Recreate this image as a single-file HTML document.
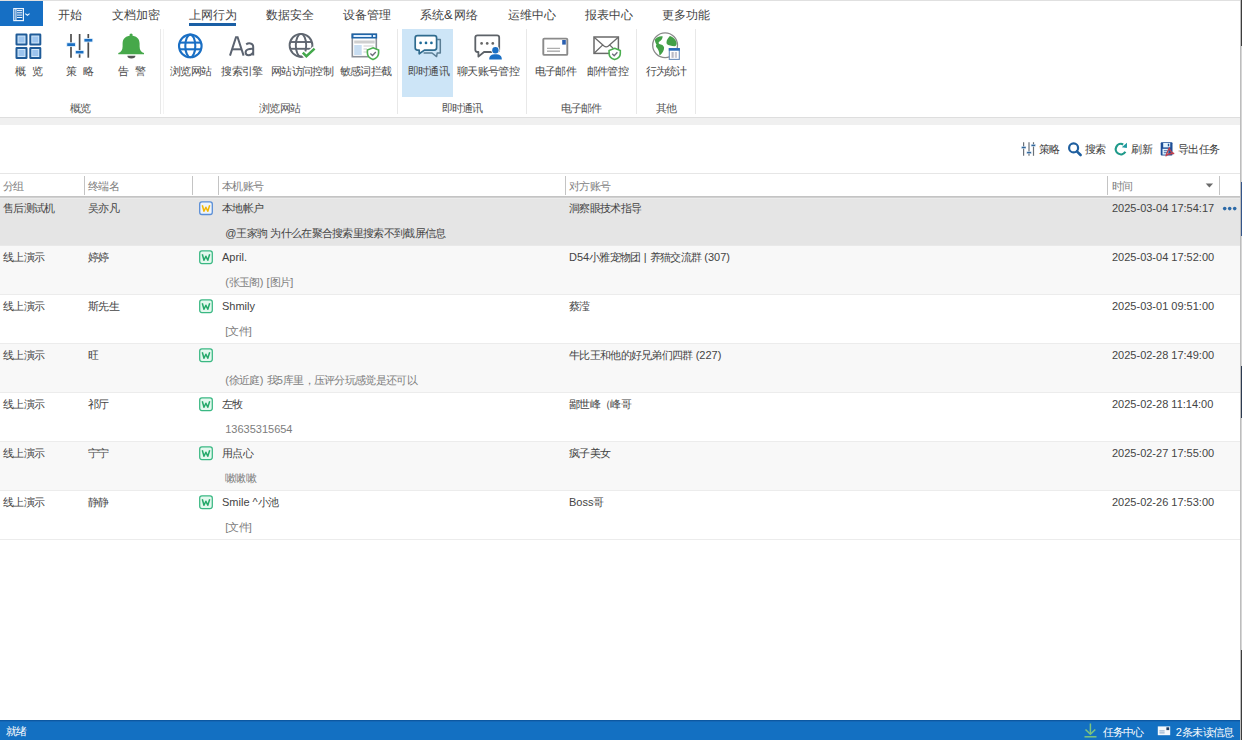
<!DOCTYPE html>
<html><head><meta charset="utf-8"><style>
*{margin:0;padding:0;box-sizing:border-box}
html,body{width:1242px;height:740px;overflow:hidden;background:#fff}
body{position:relative;font-family:"Liberation Sans",sans-serif}
.r{position:absolute}
.t,.tab,.lbl,.grp,.tb,.hd,.row,.row2,.st{position:absolute;white-space:pre;line-height:12px;font-size:11px;color:#444}
.c{font-size:11px;letter-spacing:-.7px}
.tab{font-size:12px;color:#444}
.amp{font-size:13px;letter-spacing:1.3px}
.tab .c{font-size:12px;letter-spacing:0}
.lbl{color:#4a4a4a}
.grp{color:#555}
.tb{color:#3c3c3c}
.hd{color:#808080}
.row{color:#444}
.row2{color:#7d7d7d}
.st{color:#fff}
svg.ov{position:absolute;left:0;top:0}
</style></head><body>
<div class="r" style="left:0px;top:0px;width:1242px;height:1px;background:#e0e0e0;"></div>
<div class="r" style="left:0px;top:1px;width:43px;height:24.5px;background:#166fc4;"></div>
<div class="tab" style="left:58px;top:9px;"><span class="c">开始</span></div>
<div class="tab" style="left:111.5px;top:9px;"><span class="c">文档加密</span></div>
<div class="tab" style="left:189px;top:9px;"><span class="c">上网行为</span></div>
<div class="tab" style="left:265.5px;top:9px;"><span class="c">数据安全</span></div>
<div class="tab" style="left:343px;top:9px;"><span class="c">设备管理</span></div>
<div class="tab" style="left:420px;top:9px;"><span class="c">系统</span><span class="amp">&amp;</span><span class="c">网络</span></div>
<div class="tab" style="left:507.5px;top:9px;"><span class="c">运维中心</span></div>
<div class="tab" style="left:584.5px;top:9px;"><span class="c">报表中心</span></div>
<div class="tab" style="left:662px;top:9px;"><span class="c">更多功能</span></div>
<div class="r" style="left:189px;top:23px;width:47px;height:2.5px;background:#1a5fa5;"></div>
<div class="r" style="left:402px;top:28.5px;width:51px;height:68px;background:#cde5f7;"></div>
<div class="lbl" style="left:15px;top:65px;"><span class="c">概</span></div>
<div class="lbl" style="left:31.8px;top:65px;"><span class="c">览</span></div>
<div class="lbl" style="left:66.2px;top:65px;"><span class="c">策</span></div>
<div class="lbl" style="left:83.1px;top:65px;"><span class="c">略</span></div>
<div class="lbl" style="left:118.2px;top:65px;"><span class="c">告</span></div>
<div class="lbl" style="left:135.1px;top:65px;"><span class="c">警</span></div>
<div class="lbl" style="left:170px;top:65px;"><span class="c">浏览网站</span></div>
<div class="lbl" style="left:221.4px;top:65px;"><span class="c">搜索引擎</span></div>
<div class="lbl" style="left:271.1px;top:65px;"><span class="c">网站访问控制</span></div>
<div class="lbl" style="left:339.7px;top:65px;"><span class="c">敏感词拦截</span></div>
<div class="lbl" style="left:407.8px;top:65px;"><span class="c">即时通讯</span></div>
<div class="lbl" style="left:457.2px;top:65px;"><span class="c">聊天账号管控</span></div>
<div class="lbl" style="left:534.8px;top:65px;"><span class="c">电子邮件</span></div>
<div class="lbl" style="left:586.8px;top:65px;"><span class="c">邮件管控</span></div>
<div class="lbl" style="left:645.6px;top:65px;"><span class="c">行为统计</span></div>
<div class="grp" style="left:69.6px;top:102px;"><span class="c">概览</span></div>
<div class="grp" style="left:259px;top:102px;"><span class="c">浏览网站</span></div>
<div class="grp" style="left:441.6px;top:102px;"><span class="c">即时通讯</span></div>
<div class="grp" style="left:560.6px;top:102px;"><span class="c">电子邮件</span></div>
<div class="grp" style="left:655.7px;top:102px;"><span class="c">其他</span></div>
<div class="r" style="left:160px;top:29px;width:1px;height:85px;background:#e8e8e8;"></div>
<div class="r" style="left:397px;top:29px;width:1px;height:85px;background:#e8e8e8;"></div>
<div class="r" style="left:526px;top:29px;width:1px;height:85px;background:#e8e8e8;"></div>
<div class="r" style="left:636px;top:29px;width:1px;height:85px;background:#e8e8e8;"></div>
<div class="r" style="left:695px;top:29px;width:1px;height:85px;background:#e8e8e8;"></div>
<div class="r" style="left:163px;top:29px;width:1px;height:85px;background:#f3f3f3;"></div>
<div class="r" style="left:0px;top:117px;width:1240px;height:1px;background:#dedede;"></div>
<div class="r" style="left:0px;top:118px;width:1240px;height:7px;background:#f0f0f0;"></div>
<div class="tb" style="left:1039px;top:143px;"><span class="c">策略</span></div>
<div class="tb" style="left:1085px;top:143px;"><span class="c">搜索</span></div>
<div class="tb" style="left:1131.4px;top:143px;"><span class="c">刷新</span></div>
<div class="tb" style="left:1178px;top:143px;"><span class="c">导出任务</span></div>
<div class="r" style="left:0px;top:173px;width:1240px;height:1px;background:#e6e6e6;"></div>
<div class="r" style="left:84px;top:176px;width:1px;height:19px;background:#c4c4c4;"></div>
<div class="r" style="left:192px;top:176px;width:1px;height:19px;background:#c4c4c4;"></div>
<div class="r" style="left:218px;top:176px;width:1px;height:19px;background:#c4c4c4;"></div>
<div class="r" style="left:565px;top:176px;width:1px;height:19px;background:#c4c4c4;"></div>
<div class="r" style="left:1107px;top:176px;width:1px;height:19px;background:#c4c4c4;"></div>
<div class="r" style="left:1219px;top:176px;width:1px;height:19px;background:#c4c4c4;"></div>
<div class="hd" style="left:3px;top:180px;"><span class="c">分组</span></div>
<div class="hd" style="left:88px;top:180px;"><span class="c">终端名</span></div>
<div class="hd" style="left:222px;top:180px;"><span class="c">本机账号</span></div>
<div class="hd" style="left:569px;top:180px;"><span class="c">对方账号</span></div>
<div class="hd" style="left:1112px;top:180px;"><span class="c">时间</span></div>
<div class="r" style="left:0px;top:197px;width:1240px;height:48px;background:#e5e5e5;"></div>
<div class="r" style="left:0px;top:245px;width:1240px;height:1px;background:#e9e9e9;"></div>
<div class="row" style="left:3px;top:202px;"><span class="c">售后测试机</span></div>
<div class="row" style="left:88px;top:202px;"><span class="c">吴亦凡</span></div>
<div class="row" style="left:222px;top:202px;"><span class="c">本地帐户</span></div>
<div class="row" style="left:225.2px;top:227px;">@<span class="c">王家驹</span> <span class="c">为什么在聚合搜索里搜索不到截屏信息</span></div>
<div class="row" style="left:569px;top:202px;"><span class="c">洞察眼技术指导</span></div>
<div class="row" style="left:1112px;top:202px;">2025-03-04 17:54:17</div>
<div class="r" style="left:0px;top:246px;width:1240px;height:48px;background:#f8f8f8;"></div>
<div class="r" style="left:0px;top:294px;width:1240px;height:1px;background:#ececec;"></div>
<div class="row" style="left:3px;top:251px;"><span class="c">线上演示</span></div>
<div class="row" style="left:88px;top:251px;"><span class="c">婷婷</span></div>
<div class="row" style="left:222px;top:251px;">April.</div>
<div class="row2" style="left:225.2px;top:276px;">(<span class="c">张玉阁</span>) [<span class="c">图片</span>]</div>
<div class="row" style="left:569px;top:251px;">D54<span class="c">小雅宠物团</span> | <span class="c">养猫交流群</span> (307)</div>
<div class="row" style="left:1112px;top:251px;">2025-03-04 17:52:00</div>
<div class="r" style="left:0px;top:295px;width:1240px;height:48px;background:#ffffff;"></div>
<div class="r" style="left:0px;top:343px;width:1240px;height:1px;background:#ececec;"></div>
<div class="row" style="left:3px;top:300px;"><span class="c">线上演示</span></div>
<div class="row" style="left:88px;top:300px;"><span class="c">斯先生</span></div>
<div class="row" style="left:222px;top:300px;">Shmily</div>
<div class="row2" style="left:225.2px;top:325px;">[<span class="c">文件</span>]</div>
<div class="row" style="left:569px;top:300px;"><span class="c">蔡滢</span></div>
<div class="row" style="left:1112px;top:300px;">2025-03-01 09:51:00</div>
<div class="r" style="left:0px;top:344px;width:1240px;height:48px;background:#f8f8f8;"></div>
<div class="r" style="left:0px;top:392px;width:1240px;height:1px;background:#ececec;"></div>
<div class="row" style="left:3px;top:349px;"><span class="c">线上演示</span></div>
<div class="row" style="left:88px;top:349px;"><span class="c">旺</span></div>
<div class="row" style="left:222px;top:349px;"></div>
<div class="row2" style="left:225.2px;top:374px;">(<span class="c">徐近庭</span>) <span class="c">我</span>5<span class="c">库里，压评分玩感觉是还可以</span></div>
<div class="row" style="left:569px;top:349px;"><span class="c">牛比王和他的好兄弟们四群</span> (227)</div>
<div class="row" style="left:1112px;top:349px;">2025-02-28 17:49:00</div>
<div class="r" style="left:0px;top:393px;width:1240px;height:48px;background:#ffffff;"></div>
<div class="r" style="left:0px;top:441px;width:1240px;height:1px;background:#ececec;"></div>
<div class="row" style="left:3px;top:398px;"><span class="c">线上演示</span></div>
<div class="row" style="left:88px;top:398px;"><span class="c">祁厅</span></div>
<div class="row" style="left:222px;top:398px;"><span class="c">左牧</span></div>
<div class="row2" style="left:225.2px;top:423px;">13635315654</div>
<div class="row" style="left:569px;top:398px;"><span class="c">鄙世峰（峰哥</span></div>
<div class="row" style="left:1112px;top:398px;">2025-02-28 11:14:00</div>
<div class="r" style="left:0px;top:442px;width:1240px;height:48px;background:#f8f8f8;"></div>
<div class="r" style="left:0px;top:490px;width:1240px;height:1px;background:#ececec;"></div>
<div class="row" style="left:3px;top:447px;"><span class="c">线上演示</span></div>
<div class="row" style="left:88px;top:447px;"><span class="c">宁宁</span></div>
<div class="row" style="left:222px;top:447px;"><span class="c">用点心</span></div>
<div class="row2" style="left:225.2px;top:472px;"><span class="c">嗽嗽嗽</span></div>
<div class="row" style="left:569px;top:447px;"><span class="c">疯子美女</span></div>
<div class="row" style="left:1112px;top:447px;">2025-02-27 17:55:00</div>
<div class="r" style="left:0px;top:491px;width:1240px;height:48px;background:#ffffff;"></div>
<div class="r" style="left:0px;top:539px;width:1240px;height:1px;background:#ececec;"></div>
<div class="row" style="left:3px;top:496px;"><span class="c">线上演示</span></div>
<div class="row" style="left:88px;top:496px;"><span class="c">静静</span></div>
<div class="row" style="left:222px;top:496px;">Smile ^<span class="c">小池</span></div>
<div class="row2" style="left:225.2px;top:521px;">[<span class="c">文件</span>]</div>
<div class="row" style="left:569px;top:496px;">Boss<span class="c">哥</span></div>
<div class="row" style="left:1112px;top:496px;">2025-02-26 17:53:00</div>
<div class="r" style="left:0px;top:196px;width:1240px;height:1px;background:#c4c4c4;"></div>
<div class="r" style="left:0px;top:197px;width:1240px;height:1px;background:#d0d0d0;"></div>
<div class="r" style="left:0px;top:198px;width:1240px;height:1px;background:#ebebeb;"></div>
<div class="r" style="left:0px;top:720px;width:1240px;height:20px;background:#1370c2;"></div>
<div class="r" style="left:0px;top:720px;width:1240px;height:1px;background:#0c58a2;"></div>
<div class="r" style="left:0px;top:721px;width:1240px;height:1px;background:#1466b5;"></div>
<div class="st" style="left:6px;top:725px;"><span class="c">就绪</span></div>
<div class="st" style="left:1102.5px;top:725.5px;"><span class="c">任务中心</span></div>
<div class="st" style="left:1175.8px;top:725.5px;">2<span class="c">条未读信息</span></div>
<div class="r" style="left:1240px;top:0px;width:1px;height:740px;background:#bdbdbd;"></div>
<div class="r" style="left:1241px;top:0px;width:1px;height:46px;background:#3c3c3c;"></div>
<div class="r" style="left:1241px;top:46px;width:1px;height:694px;background:#d6d6d6;"></div>
<div class="r" style="left:1241px;top:182px;width:1px;height:54px;background:#34558a;"></div>
<div class="r" style="left:1241px;top:366px;width:1px;height:52px;background:#2c3a50;"></div>
<div class="r" style="left:1241px;top:650px;width:1px;height:90px;background:#3c3c3c;"></div>
<svg class="ov" width="1242" height="740" viewBox="0 0 1242 740">
<!-- app menu icon -->
<rect x="13.8" y="8.6" width="9.6" height="12" fill="#1466b8" stroke="#eaf4ff" stroke-width="1.2"/>
<line x1="15.9" y1="8.6" x2="15.9" y2="20.6" stroke="#eaf4ff" stroke-width="1.1"/>
<g stroke="#eaf4ff" stroke-width="1.1"><line x1="17" y1="10.6" x2="22.2" y2="10.6"/><line x1="17" y1="12.8" x2="22.2" y2="12.8"/><line x1="17" y1="15.1" x2="22.2" y2="15.1"/><line x1="17" y1="17.5" x2="22.2" y2="17.5"/></g>
<path d="M25.3 13.6 L27.4 15.3 L29.6 13.6" stroke="#eaf4ff" stroke-width="1.1" fill="none"/>
<!-- grid -->
<g stroke="#1f5b98" stroke-width="2" fill="#d2e8fb">
<rect x="16.5" y="34.5" width="10" height="10" rx="0.3"/><rect x="30.3" y="34.5" width="10" height="10" rx="0.3"/>
<rect x="16.5" y="48" width="10" height="10" rx="0.3"/><rect x="30.3" y="48" width="10" height="10" rx="0.3"/>
</g>
<g fill="#9cc4ee">
<rect x="18.5" y="36.5" width="6" height="6"/><rect x="32.3" y="36.5" width="6" height="6"/>
<rect x="18.5" y="50" width="6" height="6"/><rect x="32.3" y="50" width="6" height="6"/>
</g>
<!-- sliders -->
<g stroke="#4d4d4d" stroke-width="1.7">
<line x1="71" y1="34" x2="71" y2="57.7"/><line x1="79.6" y1="34" x2="79.6" y2="57.7"/><line x1="88.3" y1="34" x2="88.3" y2="57.7"/>
</g>
<g fill="#1a6fc2" stroke="#e8f3fd" stroke-width="0.8">
<rect x="66.8" y="42.8" width="8.6" height="3.6"/><rect x="75.3" y="50.5" width="8.6" height="3.4"/><rect x="84" y="38.5" width="8.8" height="3.5"/>
</g>
<!-- bell -->
<g fill="#46a84a">
<circle cx="131.1" cy="35" r="1.6"/>
<path d="M118.3 54.3 L144 54.3 L144 53 C141.2 52.2, 139.6 50, 139.6 46.5 L139.6 43.5 C139.6 38.3, 136 35.8, 131.1 35.8 C126.2 35.8, 122.6 38.3, 122.6 43.5 L122.6 46.5 C122.6 50, 121 52.2, 118.3 53 Z"/>
</g>
<path d="M127.4 55.8 L135.4 55.8 A4 2.6 0 0 1 127.4 55.8 Z" fill="#555"/>
<!-- globe blue -->
<g stroke="#1a6fc4" stroke-width="2.1" fill="none">
<circle cx="190.3" cy="45.9" r="11.3"/>
<ellipse cx="190.3" cy="45.9" rx="5" ry="11.3"/>
<line x1="179.5" y1="42.6" x2="201.1" y2="42.6"/><line x1="179.5" y1="49.3" x2="201.1" y2="49.3"/>
</g>
<!-- Aa -->
<g stroke="#5b6370" stroke-width="2" fill="none" stroke-linejoin="miter">
<path d="M230 55.6 L236 37.3 L237.6 37.3 L243.6 55.6"/><line x1="232.3" y1="49.3" x2="241.3" y2="49.3"/>
<path d="M246.2 44.4 C248.2 42.9, 253.2 42.6, 253.2 46.8 L253.2 55.6"/>
<path d="M253.2 48.9 C249.5 48.7, 245.6 49.2, 245.6 52.4 C245.6 56, 251.2 56.1, 253.2 52.6"/>
</g>
<!-- globe gray w check -->
<g stroke="#5f6670" stroke-width="1.9" fill="none">
<circle cx="301" cy="45.3" r="11.4"/>
<ellipse cx="301" cy="45.3" rx="5.2" ry="11.4"/>
<line x1="290" y1="42" x2="312" y2="42"/><line x1="290" y1="48.8" x2="312" y2="48.8"/>
</g>
<path d="M302.8 52.6 L306.4 56.2 L314.6 48.6" stroke="#fff" stroke-width="5.5" fill="none"/>
<path d="M302.8 52.6 L306.4 56.2 L314.6 48.6" stroke="#43a84b" stroke-width="2.5" fill="none"/>
<!-- browser shield -->
<rect x="352.3" y="34.3" width="24" height="22.4" fill="#fff" stroke="#8d9198" stroke-width="1.6"/>
<rect x="351.5" y="33.5" width="25.6" height="5" fill="#1e64a8"/>
<rect x="353.5" y="35" width="18" height="2" fill="#dfefff"/>
<rect x="373" y="35" width="2.5" height="2" fill="#dfefff"/>
<rect x="354.2" y="40.5" width="20.5" height="3" fill="#cfcfcf"/>
<rect x="354.2" y="45" width="7.5" height="10" fill="#c8ddf1"/>
<g stroke="#cfcfcf" stroke-width="1.1"><line x1="363.5" y1="46" x2="373.5" y2="46"/><line x1="363.5" y1="49" x2="367" y2="49"/><line x1="363.5" y1="52" x2="367" y2="52"/></g>
<path d="M373 47.8 L378.6 50 L378.6 53 C378.6 56.5, 376 58.5, 373 59.6 C370 58.5, 367.4 56.5, 367.4 53 L367.4 50 Z" fill="#fff" stroke="#4caf50" stroke-width="1.6"/>
<path d="M370.4 53.5 L372.5 55.5 L375.8 52" stroke="#6b6b7a" stroke-width="1.3" fill="none"/>
<!-- chat -->
<path d="M437.2 39.6 L440.3 39.6 L440.3 53 L437.2 53 L436.6 56.6 L432 53 L423.6 53" stroke="#5a7d94" stroke-width="1.5" fill="none" stroke-linejoin="round"/>
<path d="M417.5 35.6 L434.3 35.6 Q436.6 35.6 436.6 37.9 L436.6 47.8 Q436.6 50.1 434.3 50.1 L424.4 50.1 L419.2 53.8 L419.2 50.1 L417.5 50.1 Q415.2 50.1 415.2 47.8 L415.2 37.9 Q415.2 35.6 417.5 35.6 Z" fill="#fff" stroke="#2f6b8e" stroke-width="1.7" stroke-linejoin="round"/>
<g fill="#1d6a98"><circle cx="420.6" cy="42.9" r="1.35"/><circle cx="426" cy="42.9" r="1.35"/><circle cx="431.4" cy="42.9" r="1.35"/></g>
<!-- chat user -->
<path d="M477.5 35.3 L497 35.3 Q499.2 35.3 499.2 37.5 L499.2 49.8 Q499.2 52 497 52 L484 52 L478.4 56.6 L478.4 52 L477.5 52 Q475.3 52 475.3 49.8 L475.3 37.5 Q475.3 35.3 477.5 35.3 Z" fill="#fff" stroke="#5d6268" stroke-width="1.8" stroke-linejoin="round"/>
<g fill="#666"><circle cx="481.6" cy="43.4" r="1.35"/><circle cx="487.2" cy="43.4" r="1.35"/><circle cx="492.8" cy="43.4" r="1.35"/></g>
<path d="M488 60 C488 54.5, 490.5 52.8, 495.5 52.8 C500.5 52.8, 503 54.5, 503 60 Z" fill="#fff"/>
<circle cx="495.4" cy="50.3" r="4.2" fill="#fff"/>
<circle cx="495.4" cy="50.3" r="3.2" fill="#1a6fc4"/>
<path d="M489.2 59.5 C489.2 55.6, 491.6 54.3, 495.5 54.3 C499.4 54.3, 501.8 55.6, 501.8 59.5 Z" fill="#1a6fc4"/>
<!-- email -->
<rect x="543.3" y="38.6" width="24" height="16.3" rx="1" fill="#fff" stroke="#8a8a8a" stroke-width="1.9"/>
<rect x="562.2" y="40" width="3.6" height="4.6" fill="#2a5fb0"/>
<line x1="547" y1="48.3" x2="560" y2="48.3" stroke="#9a9a9a" stroke-width="1"/>
<line x1="547" y1="51.2" x2="560" y2="51.2" stroke="#b0b0b0" stroke-width="1.5"/>
<!-- envelope shield -->
<rect x="594" y="37" width="24.4" height="16.4" fill="#fff" stroke="#6a6a6a" stroke-width="1.5"/>
<path d="M594.4 37.4 L604 46 Q606.2 47.8 608.4 46 L618 37.4 M594.4 53 L602.3 45.4 M618 53 L610.1 45.4" stroke="#6a6a6a" stroke-width="1.3" fill="none"/>
<path d="M614.7 48.3 L620.3 50.5 L620.3 53.5 C620.3 56.8, 617.8 58.7, 614.7 59.6 C611.6 58.7, 609.1 56.8, 609.1 53.5 L609.1 50.5 Z" fill="#fff" stroke="#4caf50" stroke-width="1.6"/>
<path d="M612.2 53.8 L614.2 55.8 L617.4 52.3" stroke="#6b6b7a" stroke-width="1.3" fill="none"/>
<!-- globe stats -->
<circle cx="665.1" cy="45.3" r="12.4" fill="#fff" stroke="#8a8a8a" stroke-width="1.3"/>
<path d="M655 39.5 C656.5 37.2, 659.5 35.8, 662.6 36.3 C662.8 38.5, 661.5 40.5, 659.5 41.5 C658.5 42.2, 658.3 43.2, 659.2 44 C661.5 44.3, 663.8 45.5, 664.1 47.5 C664.2 50.5, 662.3 53, 660.3 55 C659.6 55.3, 659.2 54.8, 659.3 54 C659.4 51.5, 658 49, 656.6 47.5 C655.6 46.3, 656 45.3, 656.5 44.5 C655.6 43.3, 654.8 41.5, 655 39.5 Z" fill="#43a047"/>
<path d="M670 36 C673 36.8, 676 39.5, 676.6 43 C676.7 44.8, 676 46.3, 674.5 46.3 C671.5 46, 668.6 45.5, 666.8 44 C666 42, 667 39.5, 668.3 38 C669 37.2, 669.4 36.4, 670 36 Z" fill="#43a047"/>
<rect x="669.3" y="48.6" width="10" height="10.8" fill="#fff" stroke="#6d8fbd" stroke-width="1.1"/>
<rect x="668.8" y="48.1" width="11" height="2.6" fill="#2a6cb8"/>
<rect x="671.5" y="52" width="2.2" height="5.8" fill="#b9b9c4"/><rect x="674.8" y="52" width="2.2" height="5.8" fill="#c9c9d2"/>

<!-- toolbar sliders -->
<g stroke="#6b7178" stroke-width="1.2">
<line x1="1023.6" y1="142.2" x2="1023.6" y2="155.8"/><line x1="1029" y1="142.2" x2="1029" y2="155.8"/><line x1="1033.5" y1="142.2" x2="1033.5" y2="155.8"/>
</g>
<g fill="#33679c" stroke="#e6f1fb" stroke-width="0.5"><rect x="1021.4" y="146.5" width="4.6" height="2"/><rect x="1026.8" y="151.7" width="4.5" height="2"/><rect x="1031.1" y="144.3" width="4.4" height="2"/></g>
<!-- search -->
<circle cx="1073.6" cy="147.9" r="4.5" stroke="#1f5f9f" stroke-width="2.2" fill="none"/>
<line x1="1076.9" y1="151.3" x2="1080.6" y2="155" stroke="#1f5f9f" stroke-width="2.6" stroke-linecap="round"/>
<!-- refresh -->
<path d="M1123.2 144.4 A5.2 5.2 0 1 0 1125.4 151.8" stroke="#1f9a8a" stroke-width="2.2" fill="none"/>
<path d="M1127 142.7 L1126.9 147.9 L1121.8 147.2 Z" fill="#1f9aa0"/>
<!-- export -->
<rect x="1160.7" y="142.2" width="11.8" height="13.2" rx="1" fill="#1d4f98"/>
<rect x="1163.2" y="143" width="7" height="4.4" fill="#e4f5ff"/>
<rect x="1167.8" y="143.7" width="1.4" height="2.6" fill="#1d4f98"/>
<rect x="1162.5" y="148.8" width="5.8" height="5.8" fill="#e4f5ff"/>
<g stroke="#1d4f98" stroke-width="0.8"><line x1="1163.8" y1="150.7" x2="1167.5" y2="150.7"/><line x1="1163.8" y1="152.7" x2="1167.5" y2="152.7"/></g>
<path d="M1165.8 156.4 C1166.8 153.5, 1168 150.2, 1169.3 148.2 C1170 150.5, 1171.8 152.8, 1174.2 153.6 C1171.5 153.3, 1168.2 153.8, 1166 155.6" stroke="#c0404c" stroke-width="1.3" fill="none"/>
<!-- header arrow -->
<path d="M1205.7 183.6 L1213.1 183.6 L1209.4 187.4 Z" fill="#6a6a6a"/>
<!-- dots -->
<g fill="#2d6aa8"><circle cx="1224.7" cy="208.6" r="1.8"/><circle cx="1229.7" cy="208.6" r="1.8"/><circle cx="1234.7" cy="208.6" r="1.8"/></g>
<!-- status icons -->
<g stroke="#7cc47f" stroke-width="1.5" fill="none">
<line x1="1090.4" y1="723.5" x2="1090.4" y2="734"/>
<path d="M1085.5 729.5 L1090.4 734.2 L1095.3 729.5"/>
<line x1="1084.5" y1="736.8" x2="1096.5" y2="736.8"/>
</g>
<rect x="1157.8" y="726.4" width="12.4" height="8.8" fill="#f4f8fc"/>
<rect x="1166.4" y="727.3" width="2.8" height="2.8" fill="#1d3d66"/>
<line x1="1159.4" y1="730.9" x2="1164.6" y2="730.9" stroke="#7d9cc0" stroke-width="0.9"/>
<line x1="1159.4" y1="732.9" x2="1164.6" y2="732.9" stroke="#7d9cc0" stroke-width="0.9"/>
<rect x="199.7" y="201.89999999999998" width="12.6" height="12.6" rx="2.2" fill="#eef4fc" stroke="#5a8ed6" stroke-width="1.3"/><path d="M202.3 205.2 L204 211.2 L205.9 207.2 L207.8 211.2 L209.7 205.2" stroke="#f2b705" stroke-width="1.5" fill="none" stroke-linejoin="round"/><rect x="199.7" y="250.89999999999998" width="12.6" height="12.6" rx="2.2" fill="#e4f8ee" stroke="#3ab883" stroke-width="1.25"/><path d="M202.3 254.2 L204 260.2 L205.9 256.2 L207.8 260.2 L209.7 254.2" stroke="#25a96a" stroke-width="1.5" fill="none" stroke-linejoin="round"/><rect x="199.7" y="299.9" width="12.6" height="12.6" rx="2.2" fill="#e4f8ee" stroke="#3ab883" stroke-width="1.25"/><path d="M202.3 303.2 L204 309.2 L205.9 305.2 L207.8 309.2 L209.7 303.2" stroke="#25a96a" stroke-width="1.5" fill="none" stroke-linejoin="round"/><rect x="199.7" y="348.9" width="12.6" height="12.6" rx="2.2" fill="#e4f8ee" stroke="#3ab883" stroke-width="1.25"/><path d="M202.3 352.2 L204 358.2 L205.9 354.2 L207.8 358.2 L209.7 352.2" stroke="#25a96a" stroke-width="1.5" fill="none" stroke-linejoin="round"/><rect x="199.7" y="397.9" width="12.6" height="12.6" rx="2.2" fill="#e4f8ee" stroke="#3ab883" stroke-width="1.25"/><path d="M202.3 401.2 L204 407.2 L205.9 403.2 L207.8 407.2 L209.7 401.2" stroke="#25a96a" stroke-width="1.5" fill="none" stroke-linejoin="round"/><rect x="199.7" y="446.9" width="12.6" height="12.6" rx="2.2" fill="#e4f8ee" stroke="#3ab883" stroke-width="1.25"/><path d="M202.3 450.2 L204 456.2 L205.9 452.2 L207.8 456.2 L209.7 450.2" stroke="#25a96a" stroke-width="1.5" fill="none" stroke-linejoin="round"/><rect x="199.7" y="495.9" width="12.6" height="12.6" rx="2.2" fill="#e4f8ee" stroke="#3ab883" stroke-width="1.25"/><path d="M202.3 499.2 L204 505.2 L205.9 501.2 L207.8 505.2 L209.7 499.2" stroke="#25a96a" stroke-width="1.5" fill="none" stroke-linejoin="round"/></svg>

</body></html>
